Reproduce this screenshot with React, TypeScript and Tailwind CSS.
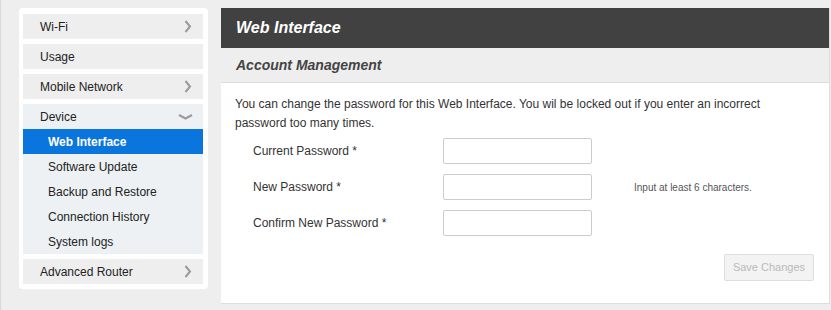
const menu = [
  { label: "Wi-Fi", arrow: true },
  { label: "Usage", arrow: false },
  { label: "Mobile Network", arrow: true },
];

const deviceItems = ["Web Interface", "Software Update", "Backup and Restore", "Connection History", "System logs"];

function ChevronRight() {
  return (
    <svg width="8" height="13" viewBox="0 0 8 13" className="text-[#9a9a9a]">
      <path d="M1.5 1 L6 6.5 L1.5 12" fill="none" stroke="currentColor" strokeWidth="2" />
    </svg>
  );
}

function ChevronDown() {
  return (
    <svg width="15" height="6" viewBox="0 0 15 6" className="text-[#9a9a9a]">
      <path d="M1 1 L7.5 4.5 L14 1" fill="none" stroke="currentColor" strokeWidth="2" />
    </svg>
  );
}

function Field({ label, hint }: { label: string; hint?: string }) {
  return (
    <div className="flex items-center h-[26px]">
      <label className="w-[208px] pl-[18px] text-[12px] text-[#333]">{label}</label>
      <input type="password" className="w-[149px] h-[26px] border border-[#cccccc] rounded-[2px] bg-white" />
      {hint && <span className="ml-[42px] text-[10px] text-[#555]">{hint}</span>}
    </div>
  );
}

export default function App() {
  return (
    <div className="w-[831px] h-[310px] bg-[#eeeeee] flex gap-[13px] pl-[18px] pt-[8px] font-['Liberation_Sans',Arial,sans-serif] border-l border-[#d8d8d8]">
      <aside className="w-[189px] h-[281px] bg-white rounded-[4px] pl-[4px] pr-[5px] pt-[6px] flex flex-col gap-[5px]">
        {menu.map((m) => (
          <div key={m.label} className="h-[25px] bg-[#eeeeee] flex items-center justify-between pl-[17px] pr-[11px] text-[12px] text-[#222]">
            <span>{m.label}</span>
            {m.arrow && <ChevronRight />}
          </div>
        ))}
        <div className="bg-[#edf1f4]">
          <div className="h-[25px] flex items-center justify-between pl-[17px] pr-[10px] text-[12px] text-[#222]">
            <span>Device</span>
            <ChevronDown />
          </div>
          {deviceItems.map((d, i) => (
            <div
              key={d}
              className={
                i === 0
                  ? "h-[25px] flex items-center pl-[25px] text-[12px] text-white bg-[#0a75dc] font-bold"
                  : "h-[25px] flex items-center pl-[25px] text-[12px] text-[#222]"
              }
            >
              {d}
            </div>
          ))}
        </div>
        <div className="h-[25px] bg-[#eeeeee] flex items-center justify-between pl-[17px] pr-[11px] text-[12px] text-[#222]">
          <span>Advanced Router</span>
          <ChevronRight />
        </div>
      </aside>

      <main className="w-[609px] h-[296px] flex flex-col border-r border-[#dddddd]">
        <div className="h-[40px] bg-[#414141] flex items-center px-[15px]">
          <h1 className="text-white text-[16px] font-bold italic">Web Interface</h1>
        </div>
        <div className="h-[35px] bg-[#eeeeee] border-b border-[#dcdcdc] flex items-center px-[15px]">
          <h2 className="text-[#444] text-[14px] font-bold italic">Account Management</h2>
        </div>
        <div className="flex-1 bg-white border-b border-[#dddddd] px-[14px] pt-[12px]">
          <p className="text-[12px] leading-[19px] text-[#333] w-[570px]">
            You can change the password for this Web Interface. You wil be locked out if you enter an incorrect password too many times.
          </p>
          <div className="flex flex-col gap-[10px] mt-[5px]">
            <Field label="Current Password *" />
            <Field label="New Password *" hint="Input at least 6 characters." />
            <Field label="Confirm New Password *" />
          </div>
          <div className="flex justify-end mt-[18px] pr-[1px]">
            <button className="w-[90px] h-[27px] bg-[#f3f3f3] border border-[#dddddd] rounded-[2px] text-[11px] text-[#b9b9b9]">
              Save Changes
            </button>
          </div>
        </div>
      </main>
    </div>
  );
}
